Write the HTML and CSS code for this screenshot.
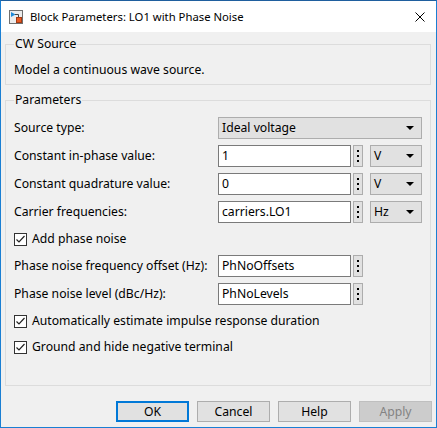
FILE: index.html
```html
<!DOCTYPE html>
<html>
<head>
<meta charset="utf-8">
<title>Block Parameters</title>
<link rel="stylesheet" href="styles.css">
</head>
<body>
<div class="window">
  <div class="titlebar">
    <svg class="app-icon" width="14" height="14" viewBox="0 0 14 14">
      <rect x="0.5" y="0.5" width="13" height="13" fill="#ececec" stroke="#6f6f6f"/>
      <polygon points="2,2 6.5,4.5 2,7" fill="#1f8ad8"/>
      <polyline points="6,4.5 9.5,4.5 9.5,7.5" fill="none" stroke="#444" stroke-width="1"/>
      <rect x="7.5" y="7.5" width="5" height="5" fill="#e85a22" stroke="#a23a14"/>
    </svg>
    <span class="title">Block Parameters: LO1 with Phase Noise</span>
    <svg class="close" width="10" height="10" viewBox="0 0 10 10">
      <path d="M0.5 0.5 L9.5 9.5 M9.5 0.5 L0.5 9.5" stroke="#000" stroke-width="1"/>
    </svg>
  </div>
  <div class="content">
    <fieldset class="group group-desc">
      <legend>CW Source</legend>
      <p class="desc">Model a continuous wave source.</p>
    </fieldset>
    <fieldset class="group group-params">
      <legend>Parameters</legend>
      <div class="row row-first">
        <span class="label">Source type:</span>
        <div class="select select-wide"><span>Ideal voltage</span><i class="arrow"></i></div>
      </div>
      <div class="row">
        <span class="label">Constant in-phase value:</span>
        <div class="field">1</div>
        <div class="kebab"><i></i><i></i><i></i></div>
        <div class="select select-unit"><span>V</span><i class="arrow"></i></div>
      </div>
      <div class="row">
        <span class="label">Constant quadrature value:</span>
        <div class="field">0</div>
        <div class="kebab"><i></i><i></i><i></i></div>
        <div class="select select-unit"><span>V</span><i class="arrow"></i></div>
      </div>
      <div class="row">
        <span class="label">Carrier frequencies:</span>
        <div class="field">carriers.LO1</div>
        <div class="kebab"><i></i><i></i><i></i></div>
        <div class="select select-unit"><span>Hz</span><i class="arrow"></i></div>
      </div>
      <div class="check-row check-add">
        <span class="checkbox"><svg width="11" height="11" viewBox="0 0 11 11"><path d="M1.5 5.5 L4 8 L9.5 2" fill="none" stroke="#222" stroke-width="1.2"/></svg></span>
        <span>Add phase noise</span>
      </div>
      <div class="row row-noise-offset">
        <span class="label">Phase noise frequency offset (Hz):</span>
        <div class="field">PhNoOffsets</div>
        <div class="kebab"><i></i><i></i><i></i></div>
      </div>
      <div class="row row-noise-level">
        <span class="label">Phase noise level (dBc/Hz):</span>
        <div class="field">PhNoLevels</div>
        <div class="kebab"><i></i><i></i><i></i></div>
      </div>
      <div class="check-row check-auto">
        <span class="checkbox"><svg width="11" height="11" viewBox="0 0 11 11"><path d="M1.5 5.5 L4 8 L9.5 2" fill="none" stroke="#222" stroke-width="1.2"/></svg></span>
        <span>Automatically estimate impulse response duration</span>
      </div>
      <div class="check-row check-ground">
        <span class="checkbox"><svg width="11" height="11" viewBox="0 0 11 11"><path d="M1.5 5.5 L4 8 L9.5 2" fill="none" stroke="#222" stroke-width="1.2"/></svg></span>
        <span>Ground and hide negative terminal</span>
      </div>
    </fieldset>
  </div>
  <div class="buttons">
    <button class="btn btn-default">OK</button>
    <button class="btn">Cancel</button>
    <button class="btn">Help</button>
    <button class="btn btn-disabled">Apply</button>
  </div>
</div>
</body>
</html>
```
FILE: styles.css
```css
html, body {
  margin: 0;
  padding: 0;
  background: #f0f0f0;
}
body {
  font-family: "Segoe UI", "Noto Sans", sans-serif;
  font-size: 12.2px;
  color: #000;
}
.window {
  width: 437px;
  height: 428px;
  box-sizing: border-box;
  border: 1px solid #1a7fd3;
  border-top-color: #1f5f9e;
  background: #f0f0f0;
  display: flex;
  flex-direction: column;
}
.titlebar {
  height: 31px;
  background: #fff;
  display: flex;
  align-items: center;
  flex-shrink: 0;
}
.app-icon {
  margin-left: 8px;
  margin-top: 1px;
  flex-shrink: 0;
}
.title {
  margin-left: 7px;
  flex: 1;
  line-height: 16px;
  font-size: 11.3px;
}
.close {
  margin-right: 11px;
  margin-top: 1px;
}
.content {
  padding: 4px 5px 0 4px;
}
.group {
  margin: 0;
  border: 1px solid #dcdcdc;
  padding: 0 8px;
  min-width: 0;
}
.group legend {
  padding: 0 1px;
  line-height: 16px;
}
.group-desc {
  padding-top: 10px;
  padding-bottom: 6px;
}
.desc {
  margin: 0;
  line-height: 16px;
}
.group-params {
  margin-top: 7px;
  padding-top: 9px;
  padding-bottom: 30px;
}
.row {
  display: flex;
  align-items: center;
  height: 22px;
  margin-top: 6px;
}
.row-first {
  margin-top: 0;
}
.row-noise-offset {
  margin-top: 8px;
}
.label {
  width: 204px;
  flex-shrink: 0;
  line-height: 16px;
  white-space: nowrap;
}
.field {
  box-sizing: border-box;
  width: 133px;
  height: 22px;
  background: #fff;
  border: 1px solid #7a7a7a;
  padding-left: 3px;
  line-height: 20px;
  white-space: nowrap;
  overflow: hidden;
}
.kebab {
  box-sizing: border-box;
  width: 10px;
  height: 22px;
  margin-left: 2px;
  background: #e1e1e1;
  border: 1px solid #adadad;
  display: flex;
  flex-direction: column;
  align-items: center;
  justify-content: center;
  gap: 3px;
}
.kebab i {
  display: block;
  width: 2px;
  height: 2px;
  background: #000;
}
.select {
  box-sizing: border-box;
  height: 22px;
  background: #e1e1e1;
  border: 1px solid #adadad;
  display: flex;
  align-items: center;
  justify-content: space-between;
  padding: 0 7px 0 3px;
  line-height: 20px;
}
.select-wide {
  width: 204px;
}
.select-unit {
  width: 52px;
  margin-left: 7px;
}
.arrow {
  display: block;
  width: 0;
  height: 0;
  border-left: 4px solid transparent;
  border-right: 4px solid transparent;
  border-top: 4px solid #000;
}
.check-row {
  display: flex;
  align-items: center;
  height: 16px;
  line-height: 16px;
  white-space: nowrap;
}
.check-add {
  margin-top: 8px;
}
.check-auto {
  margin-top: 8px;
}
.check-ground {
  margin-top: 10px;
}
.checkbox {
  box-sizing: border-box;
  width: 13px;
  height: 13px;
  background: #fff;
  border: 1px solid #333;
  margin-right: 5px;
  display: flex;
  align-items: center;
  justify-content: center;
}
.checkbox svg {
  display: block;
}
.buttons {
  display: flex;
  justify-content: flex-end;
  gap: 8px;
  padding: 15px 4px 0 0;
}
.btn {
  box-sizing: border-box;
  width: 73px;
  height: 21px;
  margin: 0;
  padding: 0;
  background: #e1e1e1;
  border: 1px solid #adadad;
  font-family: "Segoe UI", "Noto Sans", sans-serif;
  font-size: 12.2px;
  color: #000;
  line-height: 19px;
}
.btn-default {
  border: 2px solid #0078d7;
  line-height: 17px;
}
.btn-disabled {
  background: #cccccc;
  border-color: #bfbfbf;
  color: #838383;
}
```
